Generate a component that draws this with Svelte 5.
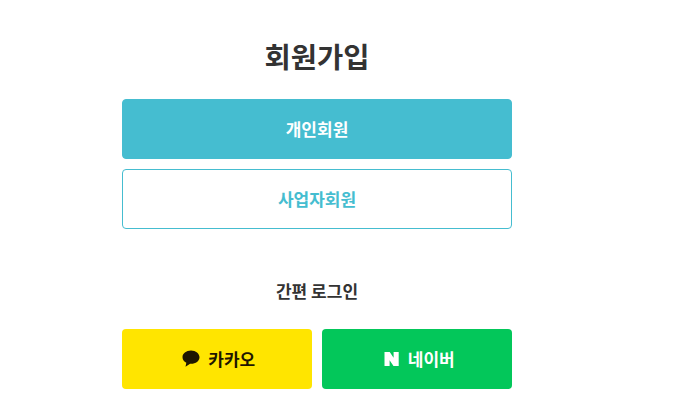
<script>
    const title = '회원가입';
</script>

<main class="page">
    <h1>{title}</h1>

    <div class="member">
        <button class="btn primary">개인회원</button>
        <button class="btn outline">사업자회원</button>
    </div>

    <h2>간편 로그인</h2>

    <div class="social">
        <button class="btn kakao">
            <svg width="18" height="17" viewBox="0 0 18 17">
                <path d="M9 0.500C4.200 0.500 0.500 3.500 0.500 7.200c0 2.400 1.500 4.400 3.800 5.600L3.500 16.800 8.100 13.800c.3 0 .6 0 .9 0 4.800 0 8.500-3 8.500-6.600S13.800.5 9 .5z" fill="#1e1600" />
            </svg>
            <span class="label">카카오</span>
        </button>
        <button class="btn naver">
            <svg class="naver-mark" width="15" height="14" viewBox="0 0 15 14">
                <path d="M0.500 0H5.700L9.600 5.800V0H14.700V14H9.500L5.600 8.200V14H0.500z" fill="#fff" />
            </svg>
            <span class="label">네이버</span>
        </button>
    </div>
</main>

<style>
    :global(body) {
        background: #fff;
        font-family: "Noto Sans CJK KR", "Noto Sans", sans-serif;
    }

    .page {
        width: 390px;
        margin-left: 122px;
        padding-top: 37px;
    }

    h1 {
        margin: 0 0 22px;
        height: 40px;
        font-size: 28.5px;
        line-height: 38px;
        font-weight: 700;
        color: #333;
        text-align: center;
    }

    h2 {
        margin: 50px 0 26px;
        height: 24px;
        font-size: 17px;
        line-height: 23px;
        font-weight: 700;
        color: #333;
        text-align: center;
    }

    .member {
        display: flex;
        flex-direction: column;
        gap: 10px;
    }

    .social {
        display: flex;
        gap: 10px;
    }

    .social .btn {
        flex: 1 1 0;
        min-width: 0;
    }

    .btn {
        display: flex;
        align-items: center;
        justify-content: center;
        gap: 8px;
        box-sizing: border-box;
        width: 100%;
        height: 60px;
        padding: 0 0 2px;
        border: 1px solid transparent;
        border-radius: 4px;
        font-family: inherit;
        font-size: 17px;
        font-weight: 700;
        cursor: pointer;
    }

    .primary {
        background: #45bdd0;
        border-color: #45bdd0;
        color: #fff;
    }

    .outline {
        background: #fff;
        border-color: #45bdd0;
        color: #45bdd0;
    }

    .kakao {
        background: #ffe500;
        color: #1e1600;
        padding-left: 4px;
    }

    .naver {
        background: #03c75a;
        color: #fff;
        gap: 9px;
        padding-left: 5px;
    }

    .naver-mark {
        margin-top: 1px;
    }
</style>
